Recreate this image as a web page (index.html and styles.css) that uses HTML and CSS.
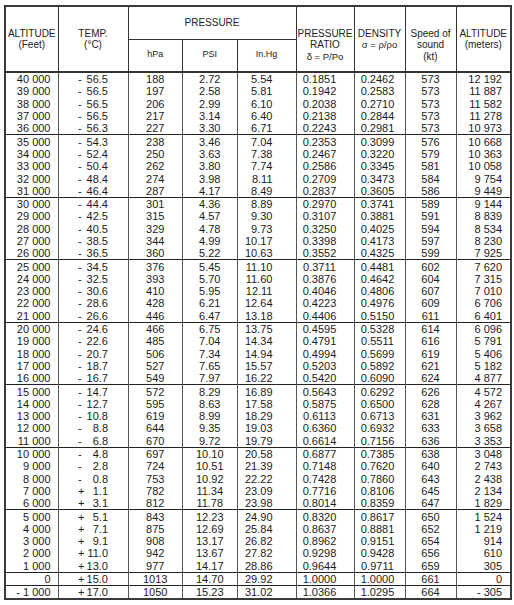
FILE: index.html
```html
<!DOCTYPE html>
<html>
<head>
<meta charset="utf-8">
<link rel="stylesheet" href="styles.css">
</head>
<body>
<div class="page">
<table class="atm">
<colgroup>
<col class="c-alt"><col class="c-temp"><col class="c-hpa"><col class="c-psi"><col class="c-inhg"><col class="c-ratio"><col class="c-dens"><col class="c-snd"><col class="c-m">
</colgroup>
<thead>
<tr class="h1">
<th rowspan="2" class="tall">ALTITUDE<br>(Feet)</th>
<th rowspan="2" class="tall">TEMP.<br>(°C)</th>
<th colspan="3" class="pgroup">PRESSURE</th>
<th rowspan="2" class="tall">PRESSURE<br>RATIO<br><span class="sym">δ = P/Po</span></th>
<th rowspan="2" class="tall">DENSITY<br><span class="sym">σ = ρ/ρo</span></th>
<th rowspan="2" class="tall mixed">Speed of<br>sound<br>(kt)</th>
<th rowspan="2" class="tall">ALTITUDE<br><span class="sub">(meters)</span></th>
</tr>
<tr class="h2">
<th class="unit">hPa</th><th class="unit">PSI</th><th class="unit">In.Hg</th>
</tr>
</thead>
<tbody>
<tr><td class="alt">40 000</td><td class="temp"><span class="tv"><span>-</span><span>56.5</span></span></td><td class="hpa">188</td><td class="psi">2.72</td><td class="inhg">5.54</td><td class="ratio">0.1851</td><td class="dens">0.2462</td><td class="snd">573</td><td class="m">12 192</td></tr>
<tr><td class="alt">39 000</td><td class="temp"><span class="tv"><span>-</span><span>56.5</span></span></td><td class="hpa">197</td><td class="psi">2.58</td><td class="inhg">5.81</td><td class="ratio">0.1942</td><td class="dens">0.2583</td><td class="snd">573</td><td class="m">11 887</td></tr>
<tr><td class="alt">38 000</td><td class="temp"><span class="tv"><span>-</span><span>56.5</span></span></td><td class="hpa">206</td><td class="psi">2.99</td><td class="inhg">6.10</td><td class="ratio">0.2038</td><td class="dens">0.2710</td><td class="snd">573</td><td class="m">11 582</td></tr>
<tr><td class="alt">37 000</td><td class="temp"><span class="tv"><span>-</span><span>56.5</span></span></td><td class="hpa">217</td><td class="psi">3.14</td><td class="inhg">6.40</td><td class="ratio">0.2138</td><td class="dens">0.2844</td><td class="snd">573</td><td class="m">11 278</td></tr>
<tr><td class="alt">36 000</td><td class="temp"><span class="tv"><span>-</span><span>56.3</span></span></td><td class="hpa">227</td><td class="psi">3.30</td><td class="inhg">6.71</td><td class="ratio">0.2243</td><td class="dens">0.2981</td><td class="snd">573</td><td class="m">10 973</td></tr>
</tbody>
<tbody>
<tr><td class="alt">35 000</td><td class="temp"><span class="tv"><span>-</span><span>54.3</span></span></td><td class="hpa">238</td><td class="psi">3.46</td><td class="inhg">7.04</td><td class="ratio">0.2353</td><td class="dens">0.3099</td><td class="snd">576</td><td class="m">10 668</td></tr>
<tr><td class="alt">34 000</td><td class="temp"><span class="tv"><span>-</span><span>52.4</span></span></td><td class="hpa">250</td><td class="psi">3.63</td><td class="inhg">7.38</td><td class="ratio">0.2467</td><td class="dens">0.3220</td><td class="snd">579</td><td class="m">10 363</td></tr>
<tr><td class="alt">33 000</td><td class="temp"><span class="tv"><span>-</span><span>50.4</span></span></td><td class="hpa">262</td><td class="psi">3.80</td><td class="inhg">7.74</td><td class="ratio">0.2586</td><td class="dens">0.3345</td><td class="snd">581</td><td class="m">10 058</td></tr>
<tr><td class="alt">32 000</td><td class="temp"><span class="tv"><span>-</span><span>48.4</span></span></td><td class="hpa">274</td><td class="psi">3.98</td><td class="inhg">8.11</td><td class="ratio">0.2709</td><td class="dens">0.3473</td><td class="snd">584</td><td class="m">9 754</td></tr>
<tr><td class="alt">31 000</td><td class="temp"><span class="tv"><span>-</span><span>46.4</span></span></td><td class="hpa">287</td><td class="psi">4.17</td><td class="inhg">8.49</td><td class="ratio">0.2837</td><td class="dens">0.3605</td><td class="snd">586</td><td class="m">9 449</td></tr>
</tbody>
<tbody>
<tr><td class="alt">30 000</td><td class="temp"><span class="tv"><span>-</span><span>44.4</span></span></td><td class="hpa">301</td><td class="psi">4.36</td><td class="inhg">8.89</td><td class="ratio">0.2970</td><td class="dens">0.3741</td><td class="snd">589</td><td class="m">9 144</td></tr>
<tr><td class="alt">29 000</td><td class="temp"><span class="tv"><span>-</span><span>42.5</span></span></td><td class="hpa">315</td><td class="psi">4.57</td><td class="inhg">9.30</td><td class="ratio">0.3107</td><td class="dens">0.3881</td><td class="snd">591</td><td class="m">8 839</td></tr>
<tr><td class="alt">28 000</td><td class="temp"><span class="tv"><span>-</span><span>40.5</span></span></td><td class="hpa">329</td><td class="psi">4.78</td><td class="inhg">9.73</td><td class="ratio">0.3250</td><td class="dens">0.4025</td><td class="snd">594</td><td class="m">8 534</td></tr>
<tr><td class="alt">27 000</td><td class="temp"><span class="tv"><span>-</span><span>38.5</span></span></td><td class="hpa">344</td><td class="psi">4.99</td><td class="inhg">10.17</td><td class="ratio">0.3398</td><td class="dens">0.4173</td><td class="snd">597</td><td class="m">8 230</td></tr>
<tr><td class="alt">26 000</td><td class="temp"><span class="tv"><span>-</span><span>36.5</span></span></td><td class="hpa">360</td><td class="psi">5.22</td><td class="inhg">10.63</td><td class="ratio">0.3552</td><td class="dens">0.4325</td><td class="snd">599</td><td class="m">7 925</td></tr>
</tbody>
<tbody>
<tr><td class="alt">25 000</td><td class="temp"><span class="tv"><span>-</span><span>34.5</span></span></td><td class="hpa">376</td><td class="psi">5.45</td><td class="inhg">11.10</td><td class="ratio">0.3711</td><td class="dens">0.4481</td><td class="snd">602</td><td class="m">7 620</td></tr>
<tr><td class="alt">24 000</td><td class="temp"><span class="tv"><span>-</span><span>32.5</span></span></td><td class="hpa">393</td><td class="psi">5.70</td><td class="inhg">11.60</td><td class="ratio">0.3876</td><td class="dens">0.4642</td><td class="snd">604</td><td class="m">7 315</td></tr>
<tr><td class="alt">23 000</td><td class="temp"><span class="tv"><span>-</span><span>30.6</span></span></td><td class="hpa">410</td><td class="psi">5.95</td><td class="inhg">12.11</td><td class="ratio">0.4046</td><td class="dens">0.4806</td><td class="snd">607</td><td class="m">7 010</td></tr>
<tr><td class="alt">22 000</td><td class="temp"><span class="tv"><span>-</span><span>28.6</span></span></td><td class="hpa">428</td><td class="psi">6.21</td><td class="inhg">12.64</td><td class="ratio">0.4223</td><td class="dens">0.4976</td><td class="snd">609</td><td class="m">6 706</td></tr>
<tr><td class="alt">21 000</td><td class="temp"><span class="tv"><span>-</span><span>26.6</span></span></td><td class="hpa">446</td><td class="psi">6.47</td><td class="inhg">13.18</td><td class="ratio">0.4406</td><td class="dens">0.5150</td><td class="snd">611</td><td class="m">6 401</td></tr>
</tbody>
<tbody>
<tr><td class="alt">20 000</td><td class="temp"><span class="tv"><span>-</span><span>24.6</span></span></td><td class="hpa">466</td><td class="psi">6.75</td><td class="inhg">13.75</td><td class="ratio">0.4595</td><td class="dens">0.5328</td><td class="snd">614</td><td class="m">6 096</td></tr>
<tr><td class="alt">19 000</td><td class="temp"><span class="tv"><span>-</span><span>22.6</span></span></td><td class="hpa">485</td><td class="psi">7.04</td><td class="inhg">14.34</td><td class="ratio">0.4791</td><td class="dens">0.5511</td><td class="snd">616</td><td class="m">5 791</td></tr>
<tr><td class="alt">18 000</td><td class="temp"><span class="tv"><span>-</span><span>20.7</span></span></td><td class="hpa">506</td><td class="psi">7.34</td><td class="inhg">14.94</td><td class="ratio">0.4994</td><td class="dens">0.5699</td><td class="snd">619</td><td class="m">5 406</td></tr>
<tr><td class="alt">17 000</td><td class="temp"><span class="tv"><span>-</span><span>18.7</span></span></td><td class="hpa">527</td><td class="psi">7.65</td><td class="inhg">15.57</td><td class="ratio">0.5203</td><td class="dens">0.5892</td><td class="snd">621</td><td class="m">5 182</td></tr>
<tr><td class="alt">16 000</td><td class="temp"><span class="tv"><span>-</span><span>16.7</span></span></td><td class="hpa">549</td><td class="psi">7.97</td><td class="inhg">16.22</td><td class="ratio">0.5420</td><td class="dens">0.6090</td><td class="snd">624</td><td class="m">4 877</td></tr>
</tbody>
<tbody>
<tr><td class="alt">15 000</td><td class="temp"><span class="tv"><span>-</span><span>14.7</span></span></td><td class="hpa">572</td><td class="psi">8.29</td><td class="inhg">16.89</td><td class="ratio">0.5643</td><td class="dens">0.6292</td><td class="snd">626</td><td class="m">4 572</td></tr>
<tr><td class="alt">14 000</td><td class="temp"><span class="tv"><span>-</span><span>12.7</span></span></td><td class="hpa">595</td><td class="psi">8.63</td><td class="inhg">17.58</td><td class="ratio">0.5875</td><td class="dens">0.6500</td><td class="snd">628</td><td class="m">4 267</td></tr>
<tr><td class="alt">13 000</td><td class="temp"><span class="tv"><span>-</span><span>10.8</span></span></td><td class="hpa">619</td><td class="psi">8.99</td><td class="inhg">18.29</td><td class="ratio">0.6113</td><td class="dens">0.6713</td><td class="snd">631</td><td class="m">3 962</td></tr>
<tr><td class="alt">12 000</td><td class="temp"><span class="tv"><span>-</span><span>8.8</span></span></td><td class="hpa">644</td><td class="psi">9.35</td><td class="inhg">19.03</td><td class="ratio">0.6360</td><td class="dens">0.6932</td><td class="snd">633</td><td class="m">3 658</td></tr>
<tr><td class="alt">11 000</td><td class="temp"><span class="tv"><span>-</span><span>6.8</span></span></td><td class="hpa">670</td><td class="psi">9.72</td><td class="inhg">19.79</td><td class="ratio">0.6614</td><td class="dens">0.7156</td><td class="snd">636</td><td class="m">3 353</td></tr>
</tbody>
<tbody>
<tr><td class="alt">10 000</td><td class="temp"><span class="tv"><span>-</span><span>4.8</span></span></td><td class="hpa">697</td><td class="psi">10.10</td><td class="inhg">20.58</td><td class="ratio">0.6877</td><td class="dens">0.7385</td><td class="snd">638</td><td class="m">3 048</td></tr>
<tr><td class="alt">9 000</td><td class="temp"><span class="tv"><span>-</span><span>2.8</span></span></td><td class="hpa">724</td><td class="psi">10.51</td><td class="inhg">21.39</td><td class="ratio">0.7148</td><td class="dens">0.7620</td><td class="snd">640</td><td class="m">2 743</td></tr>
<tr><td class="alt">8 000</td><td class="temp"><span class="tv"><span>-</span><span>0.8</span></span></td><td class="hpa">753</td><td class="psi">10.92</td><td class="inhg">22.22</td><td class="ratio">0.7428</td><td class="dens">0.7860</td><td class="snd">643</td><td class="m">2 438</td></tr>
<tr><td class="alt">7 000</td><td class="temp"><span class="tv"><span>+</span><span>1.1</span></span></td><td class="hpa">782</td><td class="psi">11.34</td><td class="inhg">23.09</td><td class="ratio">0.7716</td><td class="dens">0.8106</td><td class="snd">645</td><td class="m">2 134</td></tr>
<tr><td class="alt">6 000</td><td class="temp"><span class="tv"><span>+</span><span>3.1</span></span></td><td class="hpa">812</td><td class="psi">11.78</td><td class="inhg">23.98</td><td class="ratio">0.8014</td><td class="dens">0.8359</td><td class="snd">647</td><td class="m">1 829</td></tr>
</tbody>
<tbody>
<tr><td class="alt">5 000</td><td class="temp"><span class="tv"><span>+</span><span>5.1</span></span></td><td class="hpa">843</td><td class="psi">12.23</td><td class="inhg">24.90</td><td class="ratio">0.8320</td><td class="dens">0.8617</td><td class="snd">650</td><td class="m">1 524</td></tr>
<tr><td class="alt">4 000</td><td class="temp"><span class="tv"><span>+</span><span>7.1</span></span></td><td class="hpa">875</td><td class="psi">12.69</td><td class="inhg">25.84</td><td class="ratio">0.8637</td><td class="dens">0.8881</td><td class="snd">652</td><td class="m">1 219</td></tr>
<tr><td class="alt">3 000</td><td class="temp"><span class="tv"><span>+</span><span>9.1</span></span></td><td class="hpa">908</td><td class="psi">13.17</td><td class="inhg">26.82</td><td class="ratio">0.8962</td><td class="dens">0.9151</td><td class="snd">654</td><td class="m">914</td></tr>
<tr><td class="alt">2 000</td><td class="temp"><span class="tv"><span>+</span><span>11.0</span></span></td><td class="hpa">942</td><td class="psi">13.67</td><td class="inhg">27.82</td><td class="ratio">0.9298</td><td class="dens">0.9428</td><td class="snd">656</td><td class="m">610</td></tr>
<tr><td class="alt">1 000</td><td class="temp"><span class="tv"><span>+</span><span>13.0</span></span></td><td class="hpa">977</td><td class="psi">14.17</td><td class="inhg">28.86</td><td class="ratio">0.9644</td><td class="dens">0.9711</td><td class="snd">659</td><td class="m">305</td></tr>
</tbody>
<tbody class="single">
<tr><td class="alt">0</td><td class="temp"><span class="tv"><span>+</span><span>15.0</span></span></td><td class="hpa">1013</td><td class="psi">14.70</td><td class="inhg">29.92</td><td class="ratio">1.0000</td><td class="dens">1.0000</td><td class="snd">661</td><td class="m">0</td></tr>
</tbody>
<tbody class="single">
<tr><td class="alt">- 1 000</td><td class="temp"><span class="tv"><span>+</span><span>17.0</span></span></td><td class="hpa">1050</td><td class="psi">15.23</td><td class="inhg">31.02</td><td class="ratio">1.0366</td><td class="dens">1.0295</td><td class="snd">664</td><td class="m">- 305</td></tr>
</tbody>
</table>
</div>
</body>
</html>
```
FILE: styles.css
```css
html, body {
  margin: 0;
  padding: 0;
  background: #fff;
}
.page {
  padding: 5px 4px 0 4px;
}
.atm {
  border-collapse: collapse;
  table-layout: fixed;
  width: 506px;
  border: 2px solid #3a3a3a;
  font-family: "Liberation Sans", Arial, sans-serif;
  color: #1a1a1a;
}
.c-alt { width: 53px; }
.c-temp { width: 70px; }
.c-hpa { width: 54.5px; }
.c-psi { width: 54.5px; }
.c-inhg { width: 59px; }
.c-ratio { width: 58px; }
.c-dens { width: 51px; }
.c-snd { width: 51px; }
.c-m { width: 55px; }

th {
  font-weight: normal;
  font-size: 10px;
  line-height: 11.3px;
  border: 1px solid #333;
  padding: 0;
  text-align: center;
  color: #222;
}
.h1 { height: 33px; }
.h2 { height: 33px; }
th.tall {
  vertical-align: top;
  padding-top: 21px;
}
th.mixed { font-size: 10px; }
th.pgroup {
  vertical-align: middle;
  font-size: 10px;
}
th.unit {
  vertical-align: top;
  padding-top: 9px;
  font-size: 9px;
}
.sym { font-size: 9.5px; }
.sub { font-size: 10px; }

thead { border-bottom: 2px solid #333; }
tbody { border-top: 1px solid #222; }
tbody.single { border-top: 1.5px solid #222; }

td {
  font-size: 11px;
  line-height: 12px;
  height: 12.3px;
  padding: 0;
  border-left: 1px solid #555;
  border-right: 1px solid #555;
  white-space: nowrap;
  text-align: center;
}
td.alt { text-align: right; padding-right: 7px; }
td.temp { text-align: center; }
.tv {
  display: inline-flex;
  justify-content: space-between;
  width: 30px;
  vertical-align: top;
}
td.hpa { text-align: center; }
td.psi { text-align: center; }
td.inhg { text-align: right; padding-right: 23px; }
td.ratio { text-align: center; padding-right: 11px; }
td.dens { text-align: center; padding-right: 4px; }
td.snd { text-align: center; }
td.m { text-align: right; padding-right: 8px; }
```
